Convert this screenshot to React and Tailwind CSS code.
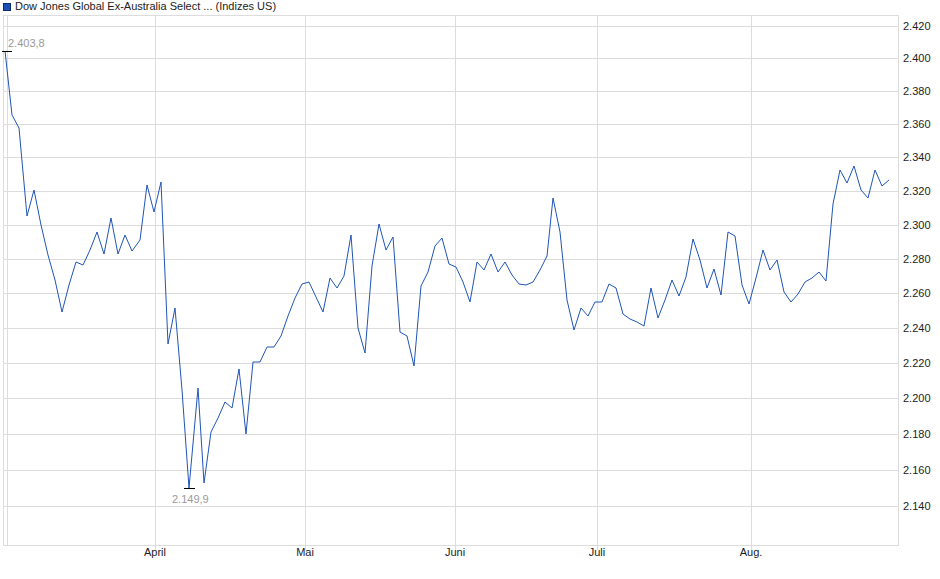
const pts = [[5,51],[12,115],[19,128],[27,216],[34,190],[41,225],[48,255],[55,280],[62,312],[69,285],[76,262],[83,265],[90,250],[97,232],[104,254],[111,218],[118,254],[125,235],[132,251],[140,240],[147,185],[154,212],[161,182],[168,344],[175,308],[182,390],[189,488],[198,388],[204,483],[211,432],[218,418],[225,402],[232,408],[239,369],[246,434],[253,362],[260,362],[267,347],[274,347],[281,336],[288,316],[295,298],[302,284],[309,282],[316,297],[323,312],[330,278],[337,288],[344,276],[351,235],[358,328],[365,353],[372,266],[379,224],[386,250],[393,237],[400,332],[407,336],[414,366],[421,286],[428,272],[435,246],[442,238],[449,264],[456,267],[463,282],[470,302],[477,262],[484,270],[491,254],[498,272],[505,262],[512,275],[519,284],[526,285],[533,282],[540,270],[547,256],[553,198],[560,232],[567,300],[574,330],[581,308],[588,316],[595,302],[602,302],[609,284],[616,288],[623,314],[630,319],[637,322],[644,326],[651,288],[658,318],[665,300],[672,280],[679,296],[686,277],[693,239],[700,260],[707,288],[714,269],[721,295],[728,232],[735,236],[742,285],[749,304],[756,278],[763,250],[770,270],[777,260],[784,292],[791,302],[798,294],[805,282],[812,278],[819,272],[826,281],[833,204],[840,170],[847,183],[854,166],[861,190],[868,198],[875,170],[882,186],[889,180]];

const yTicks = ['2.420','2.400','2.380','2.360','2.340','2.320','2.300','2.280','2.260','2.240','2.220','2.200','2.180','2.160','2.140'];
const yOf = (v) => 26 + Math.log(2420 / v) * 3903;
const xTicks = [['April',155],['Mai',305],['Juni',455],['Juli',597],['Aug.',751]];

export default function App() {
  return (
    <div className="w-[940px] h-[579px] bg-white relative" style={{ fontFamily: "'Liberation Sans', Arial, sans-serif" }}>
      <div className="absolute left-[3px] top-0 flex items-center gap-[4px] text-[11px] text-[#222] leading-[13px]">
        <span className="w-[8px] h-[8px] bg-[#1a4fb5] border border-[#0c2c6e]" />
        Dow Jones Global Ex-Australia Select ... (Indizes US)
      </div>
      <svg width="940" height="579" className="block" style={{ fontFamily: "'Liberation Sans', Arial, sans-serif" }}>
        <g stroke="#dcdcdc" strokeWidth="1" shapeRendering="crispEdges">
          <rect x="3.5" y="15.5" width="895" height="530" fill="none" />
          <line x1="7.5" y1="16" x2="7.5" y2="545" />
          {yTicks.map((t) => {
            const y = Math.round(yOf(parseFloat(t) * 1000)) + 0.5;
            return <line key={t} x1="4" y1={y} x2="898" y2={y} />;
          })}
          {xTicks.map(([l, x]) => <line key={l} x1={x + 0.5} y1="16" x2={x + 0.5} y2="550" />)}
        </g>
        <g fontSize="11" fill="#222">
          {yTicks.map((t) => (
            <text key={t} x="903" y={yOf(parseFloat(t) * 1000) + 4}>{t}</text>
          ))}
          {xTicks.map(([l, x]) => (
            <text key={l} x={x} y="556" textAnchor="middle">{l}</text>
          ))}
        </g>
        <polyline points={pts.map((p) => p.join(',')).join(' ')} fill="none" stroke="#1f55b8" strokeWidth="1" />
        <line x1="2" y1="51.5" x2="12" y2="51.5" stroke="#000" shapeRendering="crispEdges" />
        <line x1="184" y1="488.5" x2="195" y2="488.5" stroke="#000" shapeRendering="crispEdges" />
        <text x="8" y="47" fontSize="11" fill="#999">2.403,8</text>
        <text x="172" y="503" fontSize="11" fill="#999">2.149,9</text>
      </svg>
    </div>
  );
}
